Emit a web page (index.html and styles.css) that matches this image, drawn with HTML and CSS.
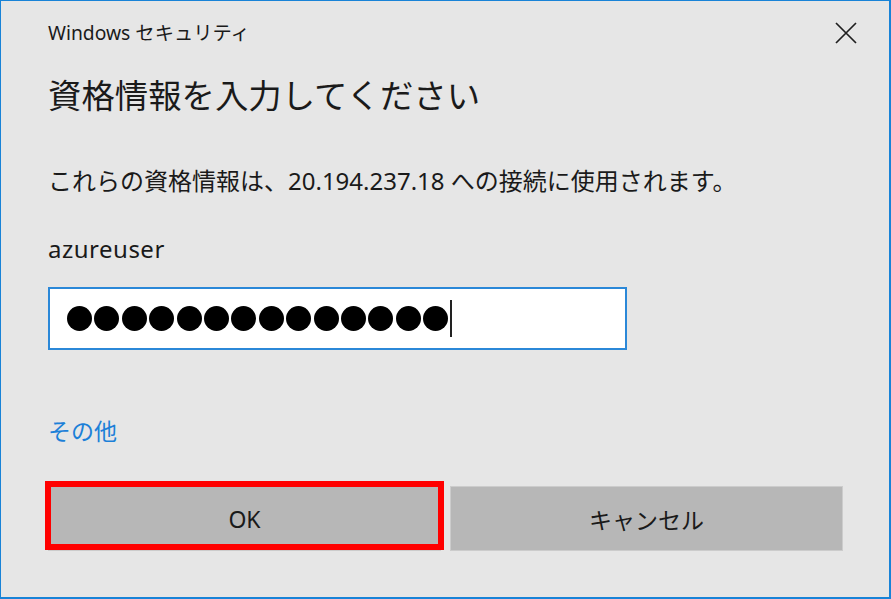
FILE: index.html
```html
<!DOCTYPE html>
<html lang="ja">
<head>
    <meta charset="UTF-8">
    <meta name="viewport" content="width=device-width, initial-scale=1.0">
    <link rel="stylesheet" href="styles.css">
</head>
<body>
    <div class="dialog">
        <div class="titlebar">
            <span class="app-name">Windows セキュリティ</span>
            <span class="close-btn">
                <svg width="22" height="22" viewBox="0 0 22 22">
                    <path d="M1 1 L21 21 M21 1 L1 21" stroke="#1f1f1f" stroke-width="1.7" fill="none"/>
                </svg>
            </span>
        </div>

        <h1 class="heading">資格情報を入力してください</h1>
        <p class="description">これらの資格情報は、20.194.237.18 への接続に使用されます。</p>
        <p class="username">azureuser</p>

        <div class="password-box">
            <span class="dot"></span><span class="dot"></span><span class="dot"></span><span class="dot"></span>
            <span class="dot"></span><span class="dot"></span><span class="dot"></span><span class="dot"></span>
            <span class="dot"></span><span class="dot"></span><span class="dot"></span><span class="dot"></span>
            <span class="dot"></span><span class="dot"></span>
            <span class="caret"></span>
        </div>

        <a class="more-link">その他</a>

        <div class="buttons">
            <button class="btn btn-ok">OK</button>
            <button class="btn">キャンセル</button>
        </div>
    </div>
</body>
</html>
```

FILE: styles.css
```css
body {
    margin: 0;
    font-family: "Noto Sans", "Noto Sans CJK JP", sans-serif;
    color: #1a1a1a;
    background: #e6e6e6;
}

.dialog {
    width: 891px;
    height: 599px;
    box-sizing: border-box;
    background: #e6e6e6;
    border-top: 1px solid #1883d7;
    border-left: 1px solid #1883d7;
    border-right: 2px solid #1883d7;
    border-bottom: 2px solid #1883d7;
    padding: 0 46px 0 47px;
    display: flex;
    flex-direction: column;
}

.titlebar {
    height: 64px;
    display: flex;
    align-items: center;
    justify-content: space-between;
}

.app-name {
    font-size: 19.3px;
    line-height: 30px;
}

.close-btn {
    display: flex;
    margin-right: -14px;
}

.heading {
    margin: 10px 0 0;
    font-size: 33.4px;
    font-weight: normal;
    line-height: 40px;
}

.description {
    margin: 51px 0 0;
    font-size: 24px;
    line-height: 30px;
}

.username {
    margin: 38px 0 0;
    font-size: 24px;
    letter-spacing: 0.5px;
    line-height: 30px;
}

.password-box {
    margin-top: 23px;
    width: 579px;
    height: 63px;
    box-sizing: border-box;
    background: #fff;
    border: 2px solid #2b88d8;
    padding-left: 17px;
    display: flex;
    align-items: center;
    gap: 2.4px;
}

.dot {
    width: 25px;
    height: 25px;
    border-radius: 50%;
    background: #000;
}

.caret {
    width: 2px;
    height: 37px;
    background: #222;
}

.more-link {
    margin-top: 66px;
    font-size: 23px;
    line-height: 30px;
    color: #1c80d8;
    align-self: flex-start;
}

.buttons {
    margin-top: 40px;
    display: grid;
    grid-template-columns: 1fr 1fr;
    gap: 9px;
}

.btn {
    position: relative;
    height: 65px;
    background: #b7b7b7;
    border: 1px solid #cccccc;
    font-family: inherit;
    font-size: 23px;
    color: #1a1a1a;
    padding: 0;
}

.btn-ok::after {
    content: '';
    position: absolute;
    top: -6px;
    left: -4px;
    right: -4px;
    bottom: 0;
    border: 6px solid #ff0000;
}
```
